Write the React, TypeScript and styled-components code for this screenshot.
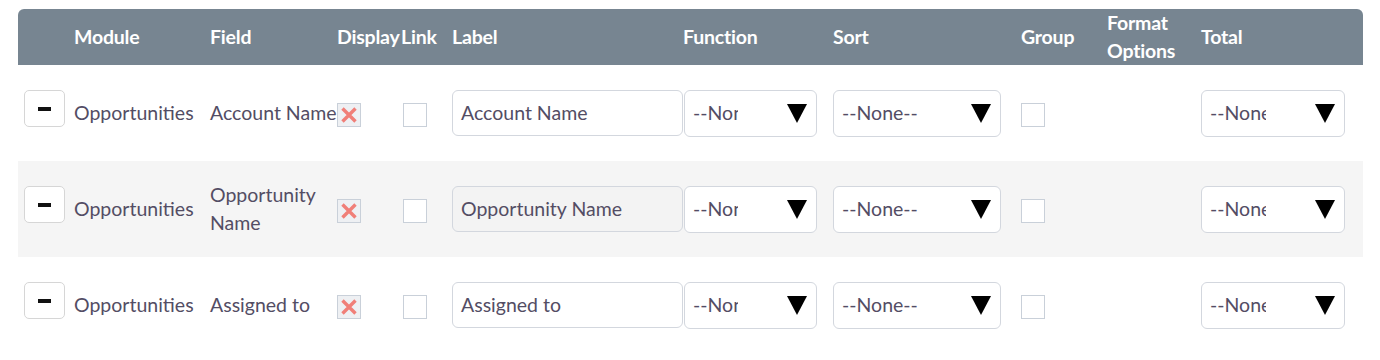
import React from "react";
import styled, { createGlobalStyle } from "styled-components";

const GlobalStyle = createGlobalStyle`
  body {
    margin: 0;
    background: #ffffff;
    font-family: Lato, "Open Sans", sans-serif;
  }
`;

const COLUMNS = "56px 136px 127px 64px 51px 231px 150px 188px 86px 94px 162px";

const Page = styled.div`
  padding: 9px 17px 0 18px;
`;

const Table = styled.div`
  width: 1345px;
`;

const HeaderRow = styled.div`
  display: grid;
  grid-template-columns: ${COLUMNS};
  align-items: center;
  height: 56px;
  background: #778591;
  border-radius: 6px 6px 0 0;
  color: #ffffff;
  font-weight: 700;
  font-size: 19.5px;
  line-height: 28px;
`;

const HeadCell = styled.div<{ $wrap?: boolean }>`
  white-space: ${(p) => (p.$wrap ? "normal" : "nowrap")};
  letter-spacing: -0.2px;
`;

const Row = styled.div<{ $alt?: boolean }>`
  display: grid;
  grid-template-columns: ${COLUMNS};
  align-items: center;
  height: 96px;
  background: ${(p) => (p.$alt ? "#f5f5f5" : "#ffffff")};
  color: #534d64;
  font-size: 19.5px;
  line-height: 28px;
`;

const Cell = styled.div<{ $pad?: number; $nowrap?: boolean }>`
  display: flex;
  align-items: center;
  padding-left: ${(p) => p.$pad ?? 0}px;
  white-space: ${(p) => (p.$nowrap ? "nowrap" : "normal")};
`;

const RemoveButton = styled.button`
  display: flex;
  align-items: center;
  justify-content: center;
  width: 41px;
  height: 37px;
  margin: 0 0 9px 6px;
  padding: 0;
  background: #ffffff;
  border: 1px solid #d6d6d6;
  border-radius: 5px;
  cursor: pointer;

  &::before {
    content: "";
    display: block;
    width: 13px;
    height: 4px;
    background: #111111;
  }
`;

const Check = styled.span<{ $disabled?: boolean }>`
  display: inline-flex;
  align-items: center;
  justify-content: center;
  width: 22px;
  height: 22px;
  margin-top: 4px;
  border: 1px solid #c9d0d9;
  background: ${(p) => (p.$disabled ? "#eef0f3" : "#ffffff")};
`;

const TextInput = styled.div<{ $disabled?: boolean }>`
  display: flex;
  align-items: center;
  box-sizing: border-box;
  width: 231px;
  height: 46px;
  padding-left: 8px;
  border: 1px solid #d3d7de;
  border-radius: 6px;
  background: ${(p) => (p.$disabled ? "#f3f3f3" : "#ffffff")};
  white-space: nowrap;
`;

const SelectBox = styled.div<{ $width: number }>`
  display: flex;
  align-items: center;
  box-sizing: border-box;
  width: ${(p) => p.$width}px;
  height: 47px;
  padding: 0 9px 0 8px;
  border: 1px solid #d3d7de;
  border-radius: 6px;
  background: #ffffff;
`;

const SelectValue = styled.span`
  flex: 1;
  overflow: hidden;
  white-space: nowrap;
  margin-right: 49px;
`;

const Arrow = styled.span`
  width: 0;
  height: 0;
  border-left: 10px solid transparent;
  border-right: 10px solid transparent;
  border-top: 19px solid #000000;
`;

const CrossIcon = () => (
  <svg width="18" height="18" viewBox="0 0 18 18">
    <path d="M2.5 2.5 L15.5 15.5 M15.5 2.5 L2.5 15.5" stroke="#f07f78" strokeWidth="3.4" />
  </svg>
);

const Select = ({ width }: { width: number }) => (
  <SelectBox $width={width}>
    <SelectValue>--None--</SelectValue>
    <Arrow />
  </SelectBox>
);

const rows = [
  { field: "Account Name", label: "Account Name", disabled: false },
  { field: "Opportunity Name", label: "Opportunity Name", disabled: true },
  { field: "Assigned to", label: "Assigned to", disabled: false },
];

export default function App() {
  return (
    <Page>
      <GlobalStyle />
      <Table>
        <HeaderRow>
          <HeadCell />
          <HeadCell>Module</HeadCell>
          <HeadCell>Field</HeadCell>
          <HeadCell>Display</HeadCell>
          <HeadCell>Link</HeadCell>
          <HeadCell>Label</HeadCell>
          <HeadCell>Function</HeadCell>
          <HeadCell>Sort</HeadCell>
          <HeadCell>Group</HeadCell>
          <HeadCell $wrap>
            Format
            <br />
            Options
          </HeadCell>
          <HeadCell>Total</HeadCell>
        </HeaderRow>
        {rows.map((r, i) => (
          <Row key={r.field} $alt={i % 2 === 1}>
            <Cell>
              <RemoveButton aria-label="remove" />
            </Cell>
            <Cell $nowrap>Opportunities</Cell>
            <Cell $nowrap={r.field.length <= 13}>{r.field}</Cell>
            <Cell>
              <Check $disabled>
                <CrossIcon />
              </Check>
            </Cell>
            <Cell $pad={2}>
              <Check />
            </Cell>
            <Cell>
              <TextInput $disabled={r.disabled}>{r.label}</TextInput>
            </Cell>
            <Cell $pad={1}>
              <Select width={133} />
            </Cell>
            <Cell>
              <Select width={168} />
            </Cell>
            <Cell>
              <Check />
            </Cell>
            <Cell />
            <Cell>
              <Select width={144} />
            </Cell>
          </Row>
        ))}
      </Table>
    </Page>
  );
}
